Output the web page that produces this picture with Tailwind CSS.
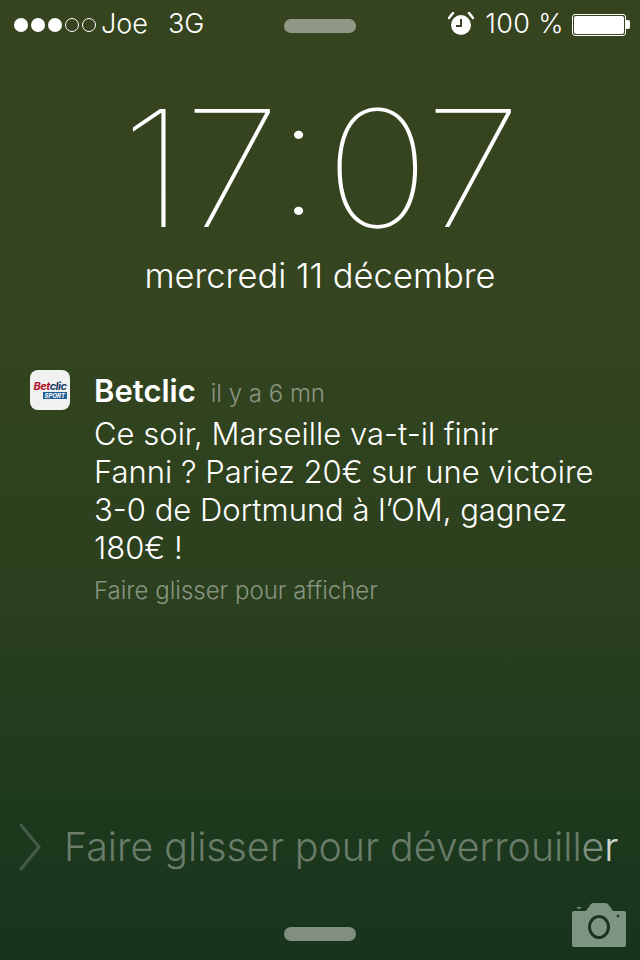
<!DOCTYPE html>
<html lang="fr">
<head>
    <meta charset="UTF-8">
    <meta name="viewport" content="width=device-width, initial-scale=1.0">
    <script src="https://cdn.jsdelivr.net/npm/@tailwindcss/browser@4"></script>
</head>
<body class="bg-[#17331c]">
    <div class="relative w-[640px] h-[960px] overflow-hidden text-white font-['Inter',sans-serif] bg-[linear-gradient(180deg,#36431f_0%,#34451f_32%,#2b401e_62%,#1d391d_85%,#17331c_100%)]">
        <!-- Status bar -->
        <header class="flex items-center h-[49px] pl-[14px] pr-[10px] text-[27px] font-light">
            <div class="flex items-center gap-[3px]">
                <span class="w-[14px] h-[14px] rounded-full bg-white"></span>
                <span class="w-[14px] h-[14px] rounded-full bg-white"></span>
                <span class="w-[14px] h-[14px] rounded-full bg-white"></span>
                <span class="w-[14px] h-[14px] rounded-full border border-white"></span>
                <span class="w-[14px] h-[14px] rounded-full border border-white"></span>
            </div>
            <span class="ml-[5px]">Joe</span>
            <span class="ml-[20px]">3G</span>
            <div class="flex-1"></div>
            <svg class="w-[26px] h-[26px]" viewBox="0 0 26 26">
                <circle cx="13" cy="13" r="10" fill="#fff"/>
                <path d="M13 7v7H8" fill="none" stroke="#36441f" stroke-width="2"/>
                <path d="M1 6 5 1M25 6 21 1" stroke="#fff" stroke-width="2.500" stroke-linecap="round"/>
            </svg>
            <span class="ml-[11px] tracking-[0.4px]">100 %</span>
            <div class="flex items-center ml-[8px]">
                <div class="w-[54px] h-[22px] rounded-[3px] border border-white p-[1px]"><div class="w-full h-full bg-white rounded-[2px]"></div></div>
                <div class="w-[4px] h-[9px] bg-white rounded-r-[2px]"></div>
            </div>
        </header>
        <span class="absolute left-[284px] top-[19px] w-[72px] h-[14px] rounded-full bg-white/45"></span>

        <!-- Clock -->
        <div class="mt-[33px] flex justify-center text-[162px] leading-[172px] font-thin tracking-[-2px] scale-x-[1.1]">17<span class="-translate-x-[4px] -translate-y-[13px]">:</span>07</div>
        <div class="text-center text-[34.5px] leading-[44px] font-light">mercredi 11 décembre</div>

        <!-- Notification -->
        <section class="flex mt-[70px] pl-[30px]">
            <div class="w-[40px] h-[40px] rounded-[8px] bg-[#f1f1f1] flex flex-col items-center justify-center mt-[2px]">
                <div class="text-[11px] leading-[11px] font-bold italic text-[#b2142b] tracking-[-0.5px]">Bet<span class="text-[#1c3f66]">clic</span></div>
                <div class="self-end mr-[3px] px-[2px] bg-[#1f5f96] text-[6px] leading-[7px] font-bold italic text-white">SPORT</div>
            </div>
            <div class="ml-[24px]">
                <div class="flex items-baseline h-[47px]">
                    <span class="text-[31px] font-semibold">Betclic</span>
                    <span class="ml-[15px] text-[24px] font-light text-white/45">il y a 6 mn</span>
                </div>
                <p class="text-[31px] leading-[38px] font-light w-[530px]">Ce soir, Marseille va-t-il finir<br>Fanni ? Pariez 20€ sur une victoire<br>3-0 de Dortmund à l’OM, gagnez<br>180€ !</p>
                <p class="mt-[9px] text-[24px] leading-[30px] font-light text-white/45">Faire glisser pour afficher</p>
            </div>
        </section>

        <!-- Slide to unlock -->
        <footer class="absolute left-0 bottom-0 w-full h-[150px]">
            <div class="flex items-center h-[74px] pl-[18px]">
                <svg class="w-[24px] h-[48px]" viewBox="0 0 24 48"><path d="M3 2 21 24 3 46" fill="none" stroke="#fff" stroke-opacity=".18" stroke-width="3" stroke-linecap="round"/></svg>
                <span class="ml-[22px] text-[39.3px] font-light text-white/35 whitespace-nowrap">Faire glisser pour déverrouill<span class="text-white/45">e</span><span class="text-white/80">r</span></span>
            </div>
            <span class="absolute left-[284px] top-[117px] w-[72px] h-[14px] rounded-full bg-white/45"></span>
            <svg class="absolute left-[572px] top-[93px] w-[54px] h-[44px]" viewBox="0 0 54 44" fill="#7d9483">
                <path fill-rule="evenodd" d="M2 8h12l5-7q1-1 3-1h11q2 0 3 1l5 7h11q2 0 2 2v32q0 2-2 2H2q-2 0-2-2V10q0-2 2-2ZM27 12a11 12 0 1 0 .01 0ZM27 15a8 9 0 1 1-.01 0Z"/>
                <path d="M5 4h4v1.500H5Z"/>
                <circle cx="46" cy="13" r="1.300" fill="#1a351c"/>
            </svg>
        </footer>
    </div>
</body>
</html>
